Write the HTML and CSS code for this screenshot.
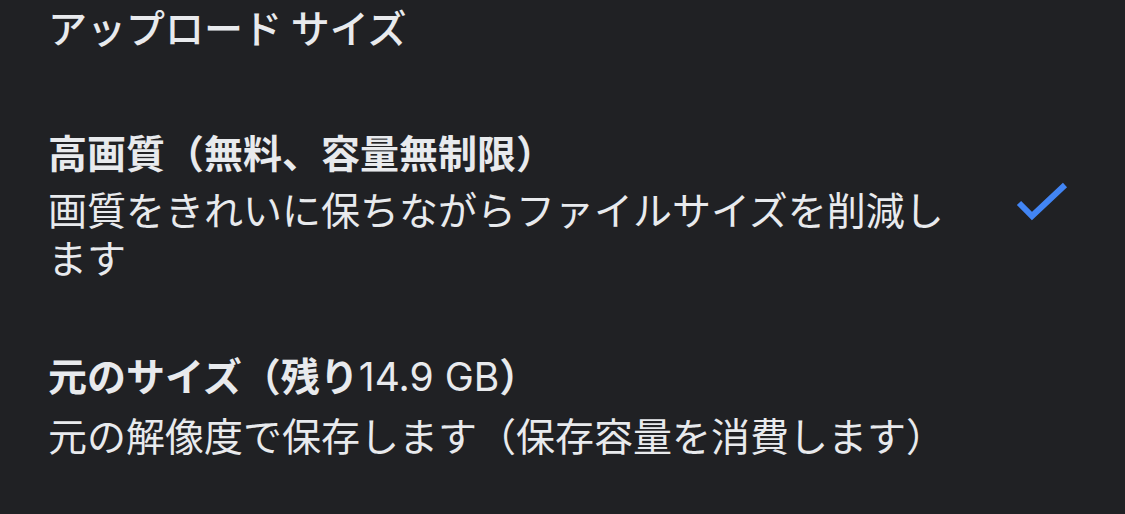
FILE: index.html
```html
<!DOCTYPE html>
<html lang="ja">
<head>
    <meta charset="UTF-8">
    <meta name="viewport" content="width=device-width, initial-scale=1.0">
    <link rel="stylesheet" href="styles.css">
</head>
<body>

<div class="section-title">アップロード サイズ</div>

<div class="option">
    <div class="option-text">
        <div class="option-name">高画質（無料、容量無制限）</div>
        <div class="option-desc">画質をきれいに保ちながらファイルサイズを削減します</div>
    </div>
    <svg class="check" viewBox="0 0 60 44" width="60" height="44">
        <polyline points="8,22 21,35 54,4" fill="none" stroke="#4285f4" stroke-width="6" stroke-linecap="butt" stroke-linejoin="miter"/>
    </svg>
</div>

<div class="option">
    <div class="option-text">
        <div class="option-name">元のサイズ（残り<span class="num">14.9 GB</span>）</div>
        <div class="option-desc">元の解像度で保存します（保存容量を消費します）</div>
    </div>
</div>

</body>
</html>
```

FILE: styles.css
```css
body {
    margin: 0;
    background-color: #202124;
    color: #e8eaed;
    font-family: "Noto Sans CJK JP", "Noto Sans", sans-serif;
    font-size: 39px;
}

.section-title {
    padding: 2px 0 0 48px;
    line-height: 48px;
    font-weight: 500;
    margin-bottom: 41px;
}

.option {
    display: flex;
    align-items: center;
    gap: 43px;
    padding: 34px 0 34px 48px;
}

.option-text {
    width: 920px;
}

.option-name {
    font-weight: bold;
    line-height: 52px;
    margin-bottom: 7px;
}

.option-name .num {
    font-family: Inter, "Noto Sans", sans-serif;
    font-weight: 400;
}

.option-desc {
    line-height: 48px;
}

.check {
    display: block;
}
```
